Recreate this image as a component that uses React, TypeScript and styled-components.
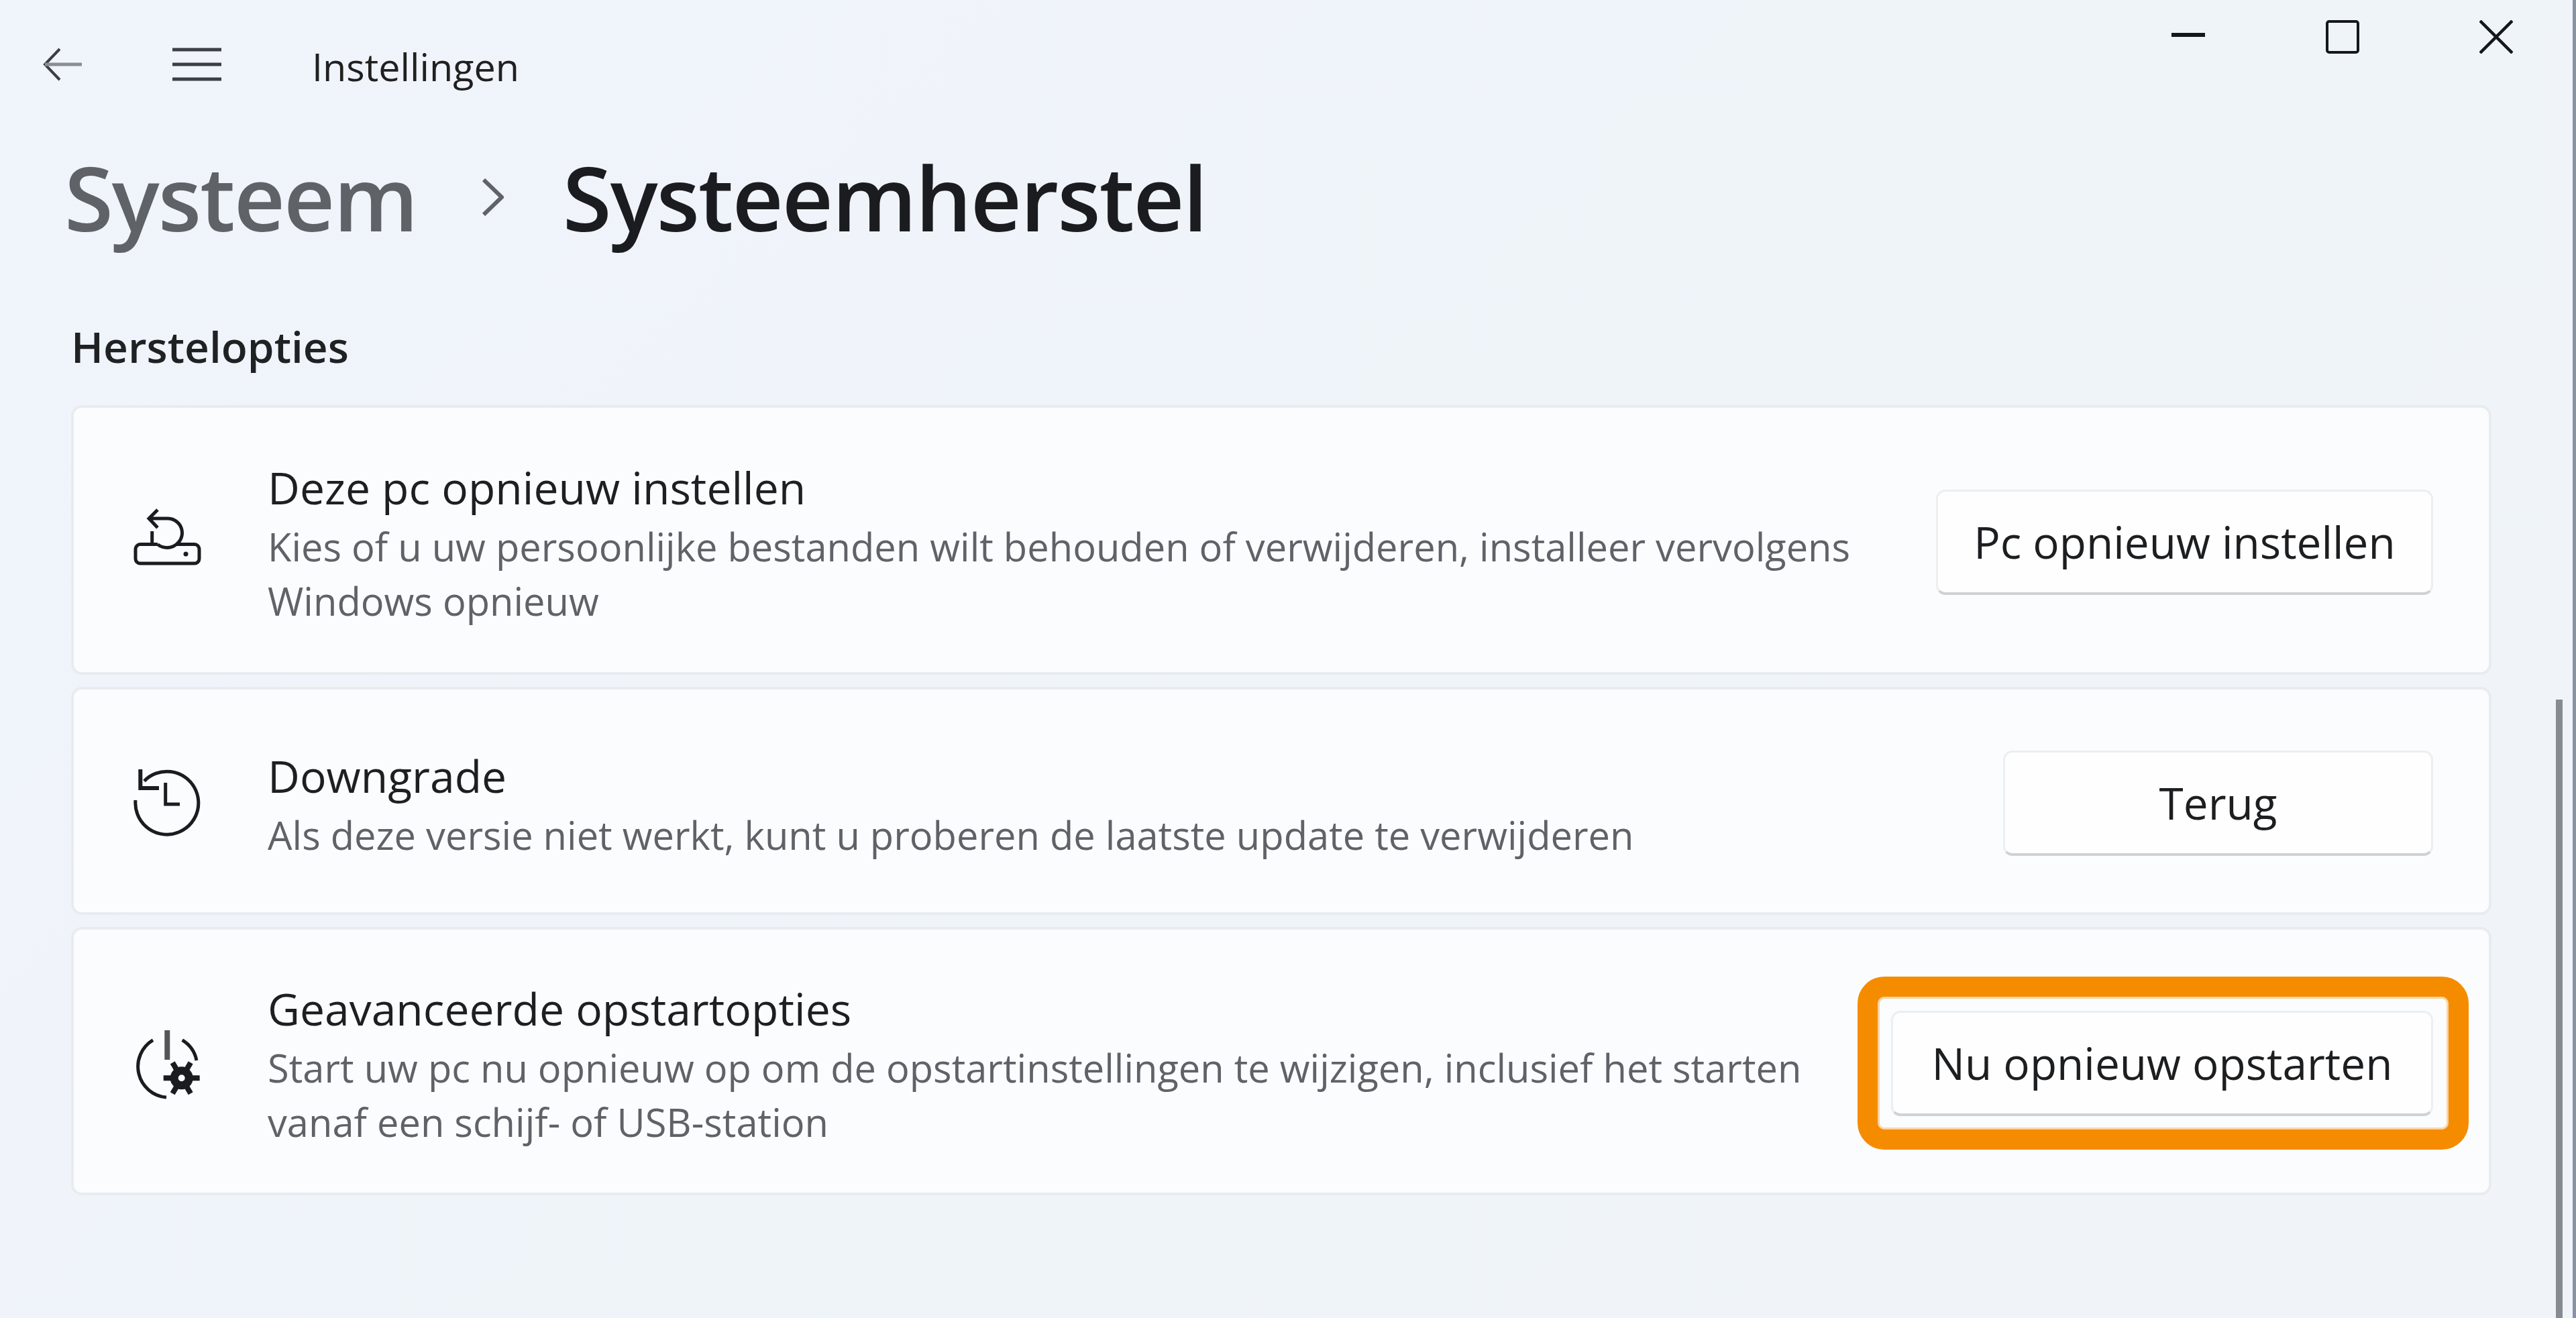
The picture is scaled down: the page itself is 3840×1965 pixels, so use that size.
import React from 'react';
import styled, { createGlobalStyle } from 'styled-components';

const GlobalStyle = createGlobalStyle`
    html, body {
        margin: 0;
        padding: 0;
        background: #eff4f9;
    }
    body {
        font-family: 'Open Sans', 'Noto Sans', sans-serif;
        color: #1b1b1b;
    }
`;

const Window = styled.div`
    position: relative;
    box-sizing: border-box;
    width: 3840px;
    height: 1965px;
    overflow: hidden;
    border-right: 5px solid #8a93a3;
    background: linear-gradient(135deg, #f0f4fb 0%, #eff4f9 55%, #f0f4f9 100%);
`;

const TitleBar = styled.header`
    display: flex;
    justify-content: space-between;
    align-items: flex-start;
    height: 214px;
    padding-left: 64px;
`;

const NavGroup = styled.div`
    display: flex;
    align-items: center;
    padding-top: 66px;
`;

const NavIcon = styled.svg<{ $gap: number }>`
    display: block;
    flex: none;
    margin-right: ${(p) => p.$gap}px;
    color: #3b3f44;
`;

const AppName = styled.span`
    position: relative;
    top: 3px;
    font-size: 57.5px;
    line-height: 60px;
    color: #202020;
`;

const WindowControls = styled.div`
    display: flex;
    padding-top: 30px;
    padding-right: 89px;
`;

const ControlIcon = styled.svg<{ $gap?: number }>`
    display: block;
    margin-left: ${(p) => p.$gap || 0}px;
    color: #15181b;
`;

const Breadcrumb = styled.div`
    display: flex;
    align-items: center;
    padding-left: 96px;
    height: 160px;
`;

const Crumb = styled.h1<{ $current?: boolean }>`
    margin: 0;
    font-size: 132.5px;
    line-height: 160px;
    font-weight: 600;
    letter-spacing: -2px;
    color: ${(p) => (p.$current ? '#1a1c1f' : '#5f6266')};
`;

const Chevron = styled.svg`
    display: block;
    margin: 0 88px 0 96px;
    color: #5f6266;
`;

const SectionLabel = styled.h2`
    margin: 105px 0 0 106px;
    height: 125px;
    font-size: 64px;
    line-height: 76px;
    font-weight: 600;
    color: #1f2123;
`;

const CardList = styled.div`
    display: flex;
    flex-direction: column;
    gap: 18px;
    margin: 0 121px 0 106px;
`;

const Card = styled.section<{ $height: number }>`
    display: flex;
    align-items: center;
    box-sizing: border-box;
    height: ${(p) => p.$height}px;
    padding: 0 83px 0 80px;
    background: #fbfcfe;
    border: 4px solid #e8ecf0;
    border-radius: 16px;
`;

const CardIcon = styled.svg<{ $offset: number }>`
    display: block;
    flex: none;
    margin-top: ${(p) => p.$offset}px;
    color: #1a1c1f;
`;

const CardText = styled.div`
    flex: 1;
    margin-left: 89px;
    padding-top: 10px;
`;

const CardTitle = styled.div`
    margin-bottom: 6px;
    font-size: 66px;
    line-height: 84px;
    color: #1d1f21;
`;

const CardDescription = styled.div`
    font-size: 57.8px;
    line-height: 81px;
    color: #5f6266;
    max-width: 2400px;
`;

const ActionButton = styled.button<{ $width: number; $highlight?: boolean }>`
    position: relative;
    flex: none;
    box-sizing: border-box;
    width: ${(p) => p.$width}px;
    height: 157px;
    margin-top: 6px;
    padding: 0;
    font-family: inherit;
    font-size: 65.7px;
    color: #1c1e20;
    background: #fefefe;
    border: 3px solid #eceef0;
    border-bottom: 4px solid #cfd1d3;
    border-radius: 14px;

    ${(p) =>
        p.$highlight &&
        `
        &::after {
            content: '';
            position: absolute;
            inset: -54px -56px -54px -53px;
            border: 30px solid #f58c00;
            border-radius: 40px;
            box-shadow: inset 0 0 0 3px rgba(245, 140, 0, 0.35);
        }
    `}
`;

const ScrollThumb = styled.div`
    position: absolute;
    top: 1043px;
    bottom: 0;
    right: 15px;
    width: 10px;
    background: #858b90;
`;

const ResetIcon = () => (
    <CardIcon $offset={-6} width="120" height="120" viewBox="0 0 120 120" fill="none" stroke="currentColor" strokeWidth="5">
        <path d="M45 18 L32 31 L45 44.7 M32 31 H59 A21.5 21.5 0 0 1 73 69.6 A22.5 22.5 0 0 1 45 69.6 M36.7 69 V50" />
        <path d="M45 69.6 H19 a7 7 0 0 0 -7 7 V91 a7 7 0 0 0 7 7 H100 a7 7 0 0 0 7 -7 V76.6 a7 7 0 0 0 -7 -7 H73" />
        <circle cx="87" cy="84" r="3.5" fill="currentColor" stroke="none" />
    </CardIcon>
);

const HistoryIcon = () => (
    <CardIcon $offset={6} width="120" height="120" viewBox="0 0 120 120" fill="none" stroke="currentColor" strokeWidth="5">
        <path d="M12 56 A47 47 0 1 0 25 27.5" />
        <path d="M19.3 10 V38 H47" strokeWidth="6" />
        <path d="M56.7 30 V62 H78" />
    </CardIcon>
);

const PowerGearIcon = () => (
    <CardIcon $offset={8} width="120" height="120" viewBox="0 0 120 120" fill="none" stroke="currentColor" strokeWidth="5">
        <path d="M38 24.7 A46 46 0 0 0 58 110 M81.7 24.7 A46 46 0 0 1 103 55" />
        <path d="M59.3 10 V54" stroke="#555" strokeWidth="8" />
        <g transform="translate(80.7 81.3)">
            <circle r="11" strokeWidth="12" />
            <path d="M-27 0 H27 M-13.5 -23 L13.5 23 M13.5 -23 L-13.5 23" strokeWidth="8" strokeDasharray="12 30 12" />
        </g>
    </CardIcon>
);

export default function App() {
    return (
        <Window>
            <GlobalStyle />
            <TitleBar>
                <NavGroup>
                    <NavIcon $gap={135} width="58" height="50" viewBox="0 0 58 50" fill="none" stroke="currentColor">
                        <path d="M25 2 L3 25 L25 48" strokeWidth="4" />
                        <path d="M3 25 H58" strokeWidth="5" stroke="#8a8d91" />
                    </NavIcon>
                    <NavIcon $gap={135} width="73" height="50" viewBox="0 0 73 50" fill="none" stroke="currentColor" strokeWidth="5">
                        <path d="M0 3 H73 M0 25 H73 M0 47 H73" />
                    </NavIcon>
                    <AppName>Instellingen</AppName>
                </NavGroup>
                <WindowControls>
                    <ControlIcon width="50" height="50" viewBox="0 0 50 50" fill="none" stroke="currentColor" strokeWidth="6">
                        <path d="M0 22 H50" />
                    </ControlIcon>
                    <ControlIcon $gap={180} width="50" height="50" viewBox="0 0 50 50" fill="none" stroke="currentColor" strokeWidth="4">
                        <rect x="2" y="2" width="46" height="46" rx="3" />
                    </ControlIcon>
                    <ControlIcon $gap={179} width="50" height="50" viewBox="0 0 50 50" fill="none" stroke="currentColor" strokeWidth="4.5">
                        <path d="M1 1 L49 49 M49 1 L1 49" />
                    </ControlIcon>
                </WindowControls>
            </TitleBar>

            <Breadcrumb>
                <Crumb>Systeem</Crumb>
                <Chevron width="33" height="56" viewBox="0 0 33 56" fill="none" stroke="currentColor" strokeWidth="6">
                    <path d="M3 2 L30 28 L3 54" />
                </Chevron>
                <Crumb $current>Systeemherstel</Crumb>
            </Breadcrumb>

            <SectionLabel>Herstelopties</SectionLabel>

            <CardList>
                <Card $height={402}>
                    <ResetIcon />
                    <CardText>
                        <CardTitle>Deze pc opnieuw instellen</CardTitle>
                        <CardDescription>
                            Kies of u uw persoonlijke bestanden wilt behouden of verwijderen, installeer vervolgens Windows opnieuw
                        </CardDescription>
                    </CardText>
                    <ActionButton $width={741}>Pc opnieuw instellen</ActionButton>
                </Card>
                <Card $height={340}>
                    <HistoryIcon />
                    <CardText>
                        <CardTitle>Downgrade</CardTitle>
                        <CardDescription>
                            Als deze versie niet werkt, kunt u proberen de laatste update te verwijderen
                        </CardDescription>
                    </CardText>
                    <ActionButton $width={641}>Terug</ActionButton>
                </Card>
                <Card $height={400}>
                    <PowerGearIcon />
                    <CardText>
                        <CardTitle>Geavanceerde opstartopties</CardTitle>
                        <CardDescription>
                            Start uw pc nu opnieuw op om de opstartinstellingen te wijzigen, inclusief het starten vanaf een schijf- of USB-station
                        </CardDescription>
                    </CardText>
                    <ActionButton $width={808} $highlight>
                        Nu opnieuw opstarten
                    </ActionButton>
                </Card>
            </CardList>

            <ScrollThumb />
        </Window>
    );
}
